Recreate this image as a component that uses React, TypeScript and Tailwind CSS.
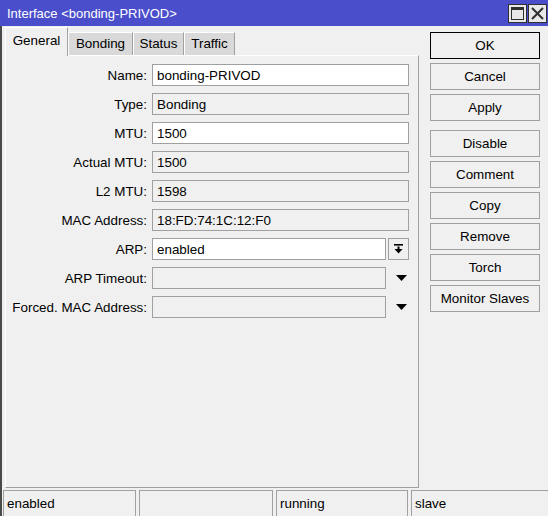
import React from "react";

const F = "font-['Liberation_Sans',Arial,sans-serif]";

function Field({
  label,
  value = "",
  editable = false,
  kind = "plain",
}: {
  label: string;
  value?: string;
  editable?: boolean;
  kind?: "plain" | "select" | "tri";
}) {
  const inputW = kind === "plain" ? "w-[257px]" : "w-[234px]";
  return (
    <div className="flex items-center h-[22px]">
      <div className="w-[141px] text-right whitespace-nowrap text-black leading-none pt-[2px]">{label}</div>
      <div
        className={`ml-[5px] h-[22px] ${inputW} border border-[#a0a0a0] flex items-center pl-[4px] pt-[2px] text-black ${
          editable ? "bg-white" : "bg-[#f0f0f0]"
        }`}
      >
        {value}
      </div>
      {kind === "select" && (
        <div className="ml-[2px] w-[21px] h-[22px] border border-[#a0a0a0] bg-[#f0f0f0] flex items-center justify-center">
          <svg width="9" height="10" viewBox="0 0 9 10">
            <rect x="0" y="0" width="9" height="1.6" fill="#000" />
            <rect x="3.5" y="2.5" width="2" height="3" fill="#000" />
            <polygon points="0.5,5 8.5,5 4.5,9.5" fill="#000" />
          </svg>
        </div>
      )}
      {kind === "tri" && (
        <div className="ml-[10px] flex items-center">
          <svg width="11" height="6" viewBox="0 0 11 6">
            <polygon points="0,0 11,0 5.5,6" fill="#000" />
          </svg>
        </div>
      )}
    </div>
  );
}

function Btn({ children, def = false, className = "" }: { children: React.ReactNode; def?: boolean; className?: string }) {
  return (
    <div
      className={`h-[27px] w-[110px] flex items-center justify-center pt-[2px] border ${
        def ? "border-black" : "border-[#a0a0a0]"
      } bg-[#f0f0f0] text-black ${className}`}
    >
      {children}
    </div>
  );
}

export default function App() {
  return (
    <div className={`w-[548px] h-[516px] bg-[#f0f0f0] text-[13.4px] ${F} overflow-hidden flex flex-col`}>
      {/* Title bar */}
      <div className="h-[26px] bg-[#4a4ecb] flex items-start shrink-0">
        <div className="pl-[7px] text-white text-[13px] leading-[27px] h-[26px] flex-1">Interface &lt;bonding-PRIVOD&gt;</div>
        <div className="flex gap-[1px] mt-[4px] mr-[1px]">
          <div className="w-[19px] h-[19px] border border-[#303030] bg-[#e8e8e8] flex items-center justify-center">
            <div className="w-[13px] h-[13px] border-[1.5px] border-t-[3px] border-[#303030]" />
          </div>
          <div className="w-[19px] h-[19px] border border-[#303030] bg-[#e8e8e8] flex items-center justify-center">
            <svg width="13" height="13" viewBox="0 0 13 13">
              <path d="M1 1 L12 12 M12 1 L1 12" stroke="#303030" strokeWidth="2" />
            </svg>
          </div>
        </div>
      </div>

      {/* Body */}
      <div className="flex-1 flex flex-col border-l-2 border-[#4a4a4a]">
        <div className="flex h-[464px]">
          {/* Left: tabs + panel */}
          <div className="pl-[3px] pt-[1px] flex flex-col">
            <div className="flex items-start h-[29px] -mb-px relative z-10">
              <div className="h-[29px] w-[63px] bg-[#f0f0f0] border-l border-t border-r border-l-white border-t-white border-r-[#a0a0a0] flex items-center justify-center pb-[1px] text-black">
                General
              </div>
              <div className="mt-[5px] h-[23px] w-[65px] bg-[#d9d9d9] border-l border-t border-r border-l-white border-t-white border-r-[#a0a0a0] flex items-center justify-center pt-[1px] text-black">
                Bonding
              </div>
              <div className="mt-[5px] h-[23px] w-[51px] bg-[#d9d9d9] border-l border-t border-r border-l-white border-t-white border-r-[#a0a0a0] flex items-center justify-center pt-[1px] text-black">
                Status
              </div>
              <div className="mt-[5px] h-[23px] w-[51px] bg-[#d9d9d9] border-l border-t border-r border-l-white border-t-white border-r-[#a0a0a0] flex items-center justify-center pt-[1px] text-black">
                Traffic
              </div>
            </div>
            <div className="w-[414px] h-[433px] border border-l-white border-t-white border-r-[#a0a0a0] border-b-[#a0a0a0] pt-[8px] flex flex-col gap-[7px]">
              <Field label="Name:" value="bonding-PRIVOD" editable />
              <Field label="Type:" value="Bonding" />
              <Field label="MTU:" value="1500" editable />
              <Field label="Actual MTU:" value="1500" />
              <Field label="L2 MTU:" value="1598" />
              <Field label="MAC Address:" value="18:FD:74:1C:12:F0" />
              <Field label="ARP:" value="enabled" editable kind="select" />
              <Field label="ARP Timeout:" kind="tri" />
              <Field label="Forced. MAC Address:" kind="tri" />
            </div>
          </div>

          {/* Right: buttons */}
          <div className="ml-[11px] pt-[6px] flex flex-col gap-[4px]">
            <Btn def>OK</Btn>
            <Btn>Cancel</Btn>
            <Btn>Apply</Btn>
            <Btn className="mt-[5px]">Disable</Btn>
            <Btn>Comment</Btn>
            <Btn>Copy</Btn>
            <Btn>Remove</Btn>
            <Btn>Torch</Btn>
            <Btn>Monitor Slaves</Btn>
          </div>
        </div>

        {/* Status bar */}
        <div className="h-[26px] flex gap-[3px] pl-[1px]">
          <div className="w-[133px] h-full border-l border-t border-r border-[#a0a0a0] pl-[3px] pt-[1px] flex items-center text-black">enabled</div>
          <div className="w-[134px] h-full border-l border-t border-r border-[#a0a0a0] pl-[3px] flex items-center text-black"></div>
          <div className="w-[132px] h-full border-l border-t border-r border-[#a0a0a0] pl-[3px] pt-[1px] flex items-center text-black">running</div>
          <div className="flex-1 h-full border-l border-t border-[#a0a0a0] pl-[3px] pt-[1px] flex items-center text-black">slave</div>
        </div>
      </div>
    </div>
  );
}
